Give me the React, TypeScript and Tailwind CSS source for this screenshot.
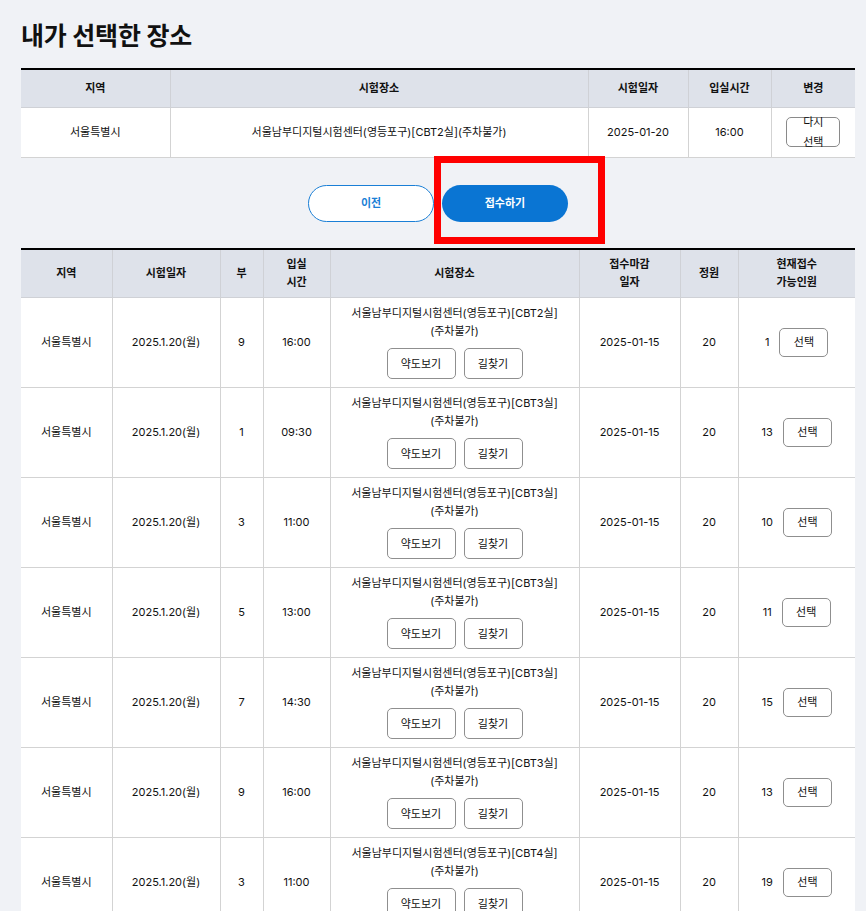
import React from "react";

const font = { fontFamily: 'Inter, "Noto Sans CJK KR", sans-serif' };

type Row = { bu: string; time: string; room: string; remain: string };

const rows: Row[] = [
  { bu: "9", time: "16:00", room: "CBT2실", remain: "1" },
  { bu: "1", time: "09:30", room: "CBT3실", remain: "13" },
  { bu: "3", time: "11:00", room: "CBT3실", remain: "10" },
  { bu: "5", time: "13:00", room: "CBT3실", remain: "11" },
  { bu: "7", time: "14:30", room: "CBT3실", remain: "15" },
  { bu: "9", time: "16:00", room: "CBT3실", remain: "13" },
  { bu: "3", time: "11:00", room: "CBT4실", remain: "19" },
];

const th = "border-x border-b border-[#cfd1d6] font-bold text-center align-middle leading-[18px] first:border-l-0 last:border-r-0";
const td = "border border-[#d3d3d3] text-center align-middle first:border-l-0 last:border-r-0";

export default function App() {
  return (
    <div className="min-h-[911px] w-[866px] bg-[#f0f2f6] text-[#111] text-[11px] font-normal" style={font}>
      <div className="pl-[21px] pr-[11px] pt-[20px]">
        <h1 className="text-[25px] font-bold leading-[32px] tracking-[-0.2px]">내가 선택한 장소</h1>

        <table className="mt-[16px] w-full table-fixed border-collapse border-t-2 border-black bg-white">
          <colgroup>
            <col className="w-[149px]" />
            <col className="w-[418px]" />
            <col className="w-[100px]" />
            <col className="w-[83px]" />
            <col className="w-[84px]" />
          </colgroup>
          <thead>
            <tr className="h-[38px] bg-[#dee2ea]">
              <th className={th}>지역</th>
              <th className={th}>시험장소</th>
              <th className={th}>시험일자</th>
              <th className={th}>입실시간</th>
              <th className={th}>변경</th>
            </tr>
          </thead>
          <tbody>
            <tr className="h-[50px]">
              <td className={td}>서울특별시</td>
              <td className={td}>서울남부디지털시험센터(영등포구)[CBT2실](주차불가)</td>
              <td className={td}>2025-01-20</td>
              <td className={td}>16:00</td>
              <td className={td}>
                <div className="flex justify-center">
                  <button className="flex h-[30px] w-[54px] flex-col items-center justify-center overflow-visible rounded-[5px] border border-[#8a8a8a] bg-white leading-[20px]">
                    <span>다시</span>
                    <span>선택</span>
                  </button>
                </div>
              </td>
            </tr>
          </tbody>
        </table>

        <div className="flex justify-center gap-[8px] pb-[26px] pt-[27px]">
          <button className="h-[37px] w-[126px] rounded-full border border-[#1a7fd6] bg-white text-[11px] font-bold text-[#1a7fd6]">
            이전
          </button>
          <div className="relative">
            <button className="h-[37px] w-[126px] rounded-full bg-[#0a75d3] text-[11px] font-bold text-white">
              접수하기
            </button>
            <div className="pointer-events-none absolute left-[-8px] top-[-29px] h-[88px] w-[171px] border-[7px] border-[#ff0000]" />
          </div>
        </div>

        <table className="w-full table-fixed border-collapse border-t-2 border-black bg-white">
          <colgroup>
            <col className="w-[91px]" />
            <col className="w-[108px]" />
            <col className="w-[43px]" />
            <col className="w-[67px]" />
            <col className="w-[249px]" />
            <col className="w-[101px]" />
            <col className="w-[58px]" />
            <col className="w-[117px]" />
          </colgroup>
          <thead>
            <tr className="h-[49px] bg-[#dee2ea]">
              <th className={th}>지역</th>
              <th className={th}>시험일자</th>
              <th className={th}>부</th>
              <th className={th}>
                입실
                <br />
                시간
              </th>
              <th className={th}>시험장소</th>
              <th className={th}>
                접수마감
                <br />
                일자
              </th>
              <th className={th}>정원</th>
              <th className={th}>
                현재접수
                <br />
                가능인원
              </th>
            </tr>
          </thead>
          <tbody>
            {rows.map((r, i) => (
              <tr key={i}>
                <td className={td}>서울특별시</td>
                <td className={td}>2025.1.20(월)</td>
                <td className={td}>{r.bu}</td>
                <td className={td}>{r.time}</td>
                <td className={td}>
                  <div className="flex flex-col items-center pb-[8px] pt-[6px] leading-[18px]">
                    <span>서울남부디지털시험센터(영등포구)[{r.room}]</span>
                    <span>(주차불가)</span>
                    <div className="mt-[8px] flex gap-[8px]">
                      <button className="h-[31px] w-[69px] rounded-[5px] border border-[#8f8f8f] bg-white">약도보기</button>
                      <button className="h-[31px] w-[59px] rounded-[5px] border border-[#8f8f8f] bg-white">길찾기</button>
                    </div>
                  </div>
                </td>
                <td className={td}>2025-01-15</td>
                <td className={td}>20</td>
                <td className={td}>
                  <div className="flex items-center justify-center gap-[10px]">
                    <span>{r.remain}</span>
                    <button className="h-[29px] w-[49px] rounded-[5px] border border-[#8f8f8f] bg-white">선택</button>
                  </div>
                </td>
              </tr>
            ))}
          </tbody>
        </table>
      </div>
    </div>
  );
}
